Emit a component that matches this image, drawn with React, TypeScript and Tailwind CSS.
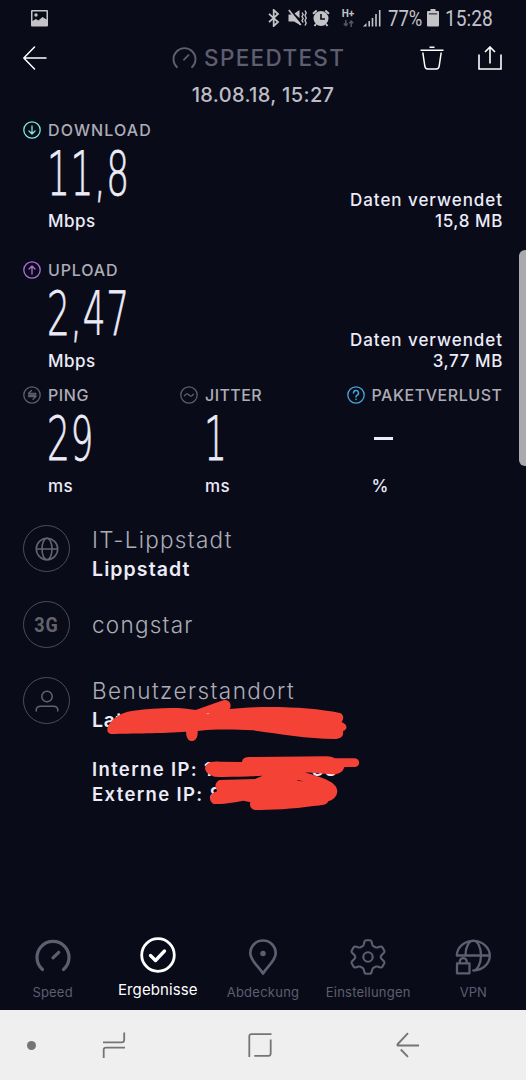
import type { ReactNode } from 'react';

const tabs = [
  { id: 'speed', label: 'Speed', tracking: 'tracking-[0.2px]' },
  { id: 'results', label: 'Ergebnisse', tracking: 'tracking-[0.1px]', active: true },
  { id: 'coverage', label: 'Abdeckung', tracking: 'tracking-[0.25px]' },
  { id: 'settings', label: 'Einstellungen', tracking: 'tracking-[0.2px]' },
  { id: 'vpn', label: 'VPN', tracking: 'tracking-normal' },
];

function StatusBar() {
  return (
    <div className="flex h-9 shrink-0 items-center pl-[31px] text-[#c3c3c8]">
      <svg width="17" height="17" viewBox="0 0 17 17" className="mr-auto">
        <path
          fill="currentColor"
          fillRule="evenodd"
          d="M1 0h15a1 1 0 0 1 1 1v14.500a1 1 0 0 1-1 1H1a1 1 0 0 1-1-1V1a1 1 0 0 1 1-1Zm.5 1.500V11l3.400-2 2.500 1.600L11.500 7l4 2.500V1.500Z"
        />
        <circle cx="5" cy="5" r="1.700" fill="currentColor" />
      </svg>

      <svg width="12" height="18" viewBox="0 0 12 18" className="mr-2" fill="none" stroke="currentColor" strokeWidth="1.800">
        <path d="M1 4.800 10 13l-4.300 4V1L10 5 1 13.200" />
      </svg>
      <svg width="19" height="18" viewBox="0 0 19 18" className="mr-[5px]" fill="none" stroke="currentColor">
        <path d="M.5 5.500h3.500l8 8v2.500L6 12.500H.5Z" fill="currentColor" stroke="none" />
        <path d="M6.500 4.500 11.500 1v8.200Z" fill="currentColor" stroke="none" />
        <path d="m.8 1 12 15" strokeWidth="1.600" />
        <path d="m14 3.500 1.200 2L14 7.500l1.200 2-1.200 2 1.200 2M17 1.500 18.200 4 17 6.500 18.200 9 17 11.500l1.200 2.500-1.200 2.500" strokeWidth="1.400" />
      </svg>
      <svg width="18" height="18" viewBox="0 0 18 18" className="mr-[11px]">
        <circle cx="9" cy="9.500" r="7.500" fill="currentColor" />
        <path d="M1 4.700 4.700 1.400M17 4.700l-3.700-3.300M4 15l-1.500 2M14 15l1.500 2" stroke="currentColor" strokeWidth="2" />
        <path d="M9 5v5h4" fill="none" stroke="#0a0b19" strokeWidth="1.600" />
      </svg>
      <div className="mr-[8px] flex w-[14px] flex-col items-center">
        <span className="font-['Roboto'] text-[10px] leading-[10px] font-bold">H+</span>
        <svg width="11" height="7" viewBox="0 0 11 7" className="mt-px" fill="none" stroke="#55565f" strokeWidth="1.500">
          <path d="M2.800 0v5.500M.8 3.500l2 2.200 2-2.200M8.200 7V1.200M6.200 3.300l2-2.200 2 2.200" />
        </svg>
      </div>
      <svg width="18" height="18" viewBox="0 0 18 18" className="mr-[7px]" fill="none" stroke="currentColor" strokeWidth="1.600">
        <path d="M0 17.500 3.500 14v3.500Z" fill="currentColor" stroke="none" />
        <path d="M6.200 17.500v-5.500M9.500 17.500V9M13 17.500V5M16.700 17.500V1" />
      </svg>
      <span className="mt-px w-[34px] origin-left scale-x-[0.84] font-['Roboto'] text-[22px] leading-none">77%</span>
      <svg width="12" height="18" viewBox="0 0 12 18" className="mr-[6px] ml-[5px]">
        <path d="M3.500 0h5v2h2.500a1 1 0 0 1 1 1v13.500a1 1 0 0 1-1 1H1a1 1 0 0 1-1-1V3a1 1 0 0 1 1-1h2.500Z" fill="currentColor" />
        <path d="M1.800 4.800h8.400" stroke="#55565f" strokeWidth="1.600" />
      </svg>
      <span className="mt-px mr-[33px] w-[48px] origin-left scale-x-[0.87] font-['Roboto'] text-[22px] leading-none">15:28</span>
    </div>
  );
}

function Header() {
  return (
    <header className="flex h-11 shrink-0 items-center pr-6 pl-[23px] text-white">
      <svg width="24" height="24" viewBox="0 0 24 24" fill="none" stroke="currentColor" strokeWidth="1.500" strokeLinecap="round" strokeLinejoin="round">
        <path d="M11.500 1 .8 12l10.700 11M.8 12H23" />
      </svg>
      <div className="ml-[125px] flex items-center gap-[7px] text-[#5d5e6f]">
        <svg width="25" height="22" viewBox="0 0 25 22" className="-mt-px" fill="none" stroke="currentColor" strokeWidth="1.900" strokeLinecap="round">
          <path d="M5 20.200a11 11 0 1 1 15 0M12 12.700l4.500-4.500" />
        </svg>
        <span className="mt-px text-[22.500px] leading-none font-medium tracking-[1.350px]">SPEEDTEST</span>
      </div>
      <svg width="24" height="24" viewBox="0 0 24 24" className="ml-auto" fill="none" stroke="currentColor" strokeWidth="1.500">
        <path d="M.5 4.200h23M9.500 1.200h5M2.800 6.500l2 13.500q.4 3 3 3h8.400q2.600 0 3-3l2-13.500" />
      </svg>
      <svg width="24" height="24" viewBox="0 0 24 24" className="ml-[34px]" fill="none" stroke="currentColor" strokeWidth="1.600">
        <path d="M1 8.500V23h22V8.500M12 17.500V1.500M7 6l5-5 5 5" />
      </svg>
    </header>
  );
}

type MetricProps = {
  icon: ReactNode;
  label: string;
  value: string;
  unit: string;
  iconColor: string;
  labelTracking?: string;
  className?: string;
};

function Metric({ icon, label, value, unit, iconColor, labelTracking = 'tracking-[0.6px]', className = '' }: MetricProps) {
  return (
    <div className={className}>
      <div className="flex h-[41px] items-center gap-[7px]">
        <svg width="18" height="18" viewBox="0 0 18 18" className={iconColor} fill="none" stroke="currentColor" strokeWidth="1.300" strokeLinecap="round" strokeLinejoin="round">
          <circle cx="9" cy="9" r="8.200" />
          {icon}
        </svg>
        <span className={`mt-px text-base leading-none font-medium text-[#adadb6] ${labelTracking}`}>{label}</span>
      </div>
      <div className="ml-6 flex h-[46px] items-center">
        {value === '–' ? (
          <span className="mt-px ml-[3px] h-[3px] w-[19px] bg-[#ececf8]" />
        ) : (
          <span className="origin-left scale-x-[0.59] font-['DejaVu_Sans'] text-[61px] leading-none font-extralight tracking-[1.200px] whitespace-nowrap text-[#ececf8] [-webkit-text-stroke:0.8px_#ececf8]">
            {value}
          </span>
        )}
      </div>
      <div className="ml-[25px] flex h-[50px] items-center pt-px">
        <span className="text-[17px] leading-none font-medium tracking-[0.5px] text-[#ececf8]">{unit}</span>
      </div>
    </div>
  );
}

function DataUsed({ amount }: { amount: string }) {
  return (
    <div className="pt-[81px] text-right text-[17px] leading-[21px] font-medium text-[#ececf8]">
      <p className="tracking-[0.950px]">Daten verwendet</p>
      <p className="tracking-[0.6px]">{amount}</p>
    </div>
  );
}

function Badge({ children }: { children: ReactNode }) {
  return (
    <div className="mt-[15px] flex size-[47px] shrink-0 items-center justify-center rounded-full border border-[#4c4d5b] text-[#62636f]">
      {children}
    </div>
  );
}

function Details() {
  return (
    <section className="relative flex h-[300px] flex-col px-[23px]">
      <div className="flex h-[76px] gap-[22px]">
        <Badge>
          <svg width="24" height="24" viewBox="0 0 24 24" fill="none" stroke="currentColor" strokeWidth="1.600">
            <circle cx="12" cy="12" r="10.700" />
            <ellipse cx="12" cy="12" rx="5" ry="10.700" />
            <path d="M1.300 12h21.400" />
          </svg>
        </Badge>
        <div className="pt-[15px] whitespace-nowrap">
          <p className="text-[22.500px] leading-[29px] font-light tracking-[1.300px] text-[#adadb6]">IT-Lippstadt</p>
          <p className="pt-px text-[19.500px] leading-[29px] font-semibold tracking-[1.100px] text-[#ececf8]">Lippstadt</p>
        </div>
      </div>

      <div className="flex h-[76px] gap-[22px]">
        <Badge>
          <span className="origin-center scale-x-[0.9] font-['Roboto'] text-[20px] leading-none font-bold tracking-[1px]">3G</span>
        </Badge>
        <p className="pt-6 text-[22.500px] leading-[29px] font-light tracking-[1.250px] text-[#adadb6]">congstar</p>
      </div>

      <div className="flex gap-[22px]">
        <Badge>
          <svg width="24" height="24" viewBox="0 0 24 24" fill="none" stroke="currentColor" strokeWidth="1.500" strokeLinecap="round">
            <circle cx="12" cy="7.500" r="5.200" />
            <path d="M1.200 22v-.8q0-4 4.500-4h12.600q4.500 0 4.500 4v.8" />
          </svg>
        </Badge>
        <div className="pt-[14px] whitespace-nowrap">
          <p className="text-[22.500px] leading-[29px] font-light tracking-[1.450px] text-[#adadb6]">Benutzerstandort</p>
          <p className="pt-px text-[19.500px] leading-[29px] font-semibold tracking-[0.800px] text-[#ececf8]">Lat</p>
          <div className="mt-[22px] w-[246px] text-[18.500px] leading-[24.500px] font-semibold tracking-[1.350px] text-[#ececf8]">
            <p className="flex">
              Interne IP: 1<span className="ml-auto">38</span>
            </p>
            <p className="flex">
              Externe IP: 8<span className="mr-[6px] ml-auto">9</span>
            </p>
          </div>
        </div>
      </div>

      {/* marker strokes over the private values */}
      <svg width="290" height="160" viewBox="0 0 870 480" className="absolute top-[150px] left-20" fill="#f44336">
        <path d="M82 207C84 188 112 158 160 152C230 143 300 140 347 150L425 122C445 114 458 133 449 147C550 136 690 140 780 159C794 164 790 180 785 186C805 195 802 209 789 213C792 229 782 237 764 237C680 236 600 222 519 211C463 208 400 207 353 213C354 233 347 243 335 243C322 242 319 229 318 215C250 220 150 220 94 222C84 221 81 214 82 207Z" />
        <path d="M375 325C377 308 393 303 420 305L486 306C488 292 498 290 520 291L740 289Q755 289 765 295L824 295C842 297 842 319 825 321L793 321C789 337 775 343 755 343L675 337C720 352 771 364 772 393C771 412 756 421 745 424C740 435 728 436 700 438C640 447 570 450 525 450C511 448 508 435 511 427L490 422C453 430 418 433 401 432C389 427 387 411 395 402L413 392C402 383 405 367 418 360L525 357L548 347C490 350 430 352 403 350C385 344 376 336 375 325Z" />
        <path d="m650 360 22 4-17-1Z" fill="#0a0b19" />
        <path d="m378 161 11-2-5 4Z" fill="#d9d3dd" />
      </svg>
    </section>
  );
}

function TabIcon({ id }: { id: string }) {
  const common = {
    width: 36,
    height: 36,
    viewBox: '0 0 36 36',
    fill: 'none',
    stroke: 'currentColor',
    strokeWidth: 2.7,
    strokeLinecap: 'round' as const,
    strokeLinejoin: 'round' as const,
  };

  if (id === 'speed') {
    return (
      <svg {...common} strokeWidth={3.2}>
        <path d="M7.500 30.500A16 16 0 1 1 28.500 30.500M18 18.800l5.700-5.500" />
      </svg>
    );
  }
  if (id === 'results') {
    return (
      <svg {...common} strokeWidth={2.8}>
        <circle cx="18" cy="18" r="16.300" />
        <path d="m10.500 18.500 5 5L24.500 14" strokeWidth="3.300" />
      </svg>
    );
  }
  if (id === 'coverage') {
    return (
      <svg {...common}>
        <path d="M18 34.500C14 28 5.300 21.500 5.300 14.200a12.700 12.700 0 0 1 25.400 0C30.700 21.500 22 28 18 34.500Z" />
        <circle cx="18" cy="14.500" r="2" fill="currentColor" strokeWidth="1.500" />
      </svg>
    );
  }
  if (id === 'settings') {
    return (
      <svg {...common} strokeWidth={2.1}>
        <path d="M14.500 2.500Q15 1.300 16.200 1.300h3.600Q21 1.300 21.500 2.500l.8 3.200Q22.700 7 24 7.500l1.300.7q1 .5 2.200.2l2.800-.8q1.400-.3 2.100.8l1.800 3.100q.6 1.200-.3 2.200l-2.200 2.200q-1 1-1 2.100t1 2.100l2.200 2.200q.9 1 .3 2.200l-1.800 3.100q-.7 1.100-2.100.8l-2.800-.8q-1.200-.3-2.200.2l-1.300.7q-1.300.5-1.700 1.800l-.8 3.200q-.5 1.200-1.700 1.200h-3.600q-1.200 0-1.700-1.200l-.8-3.200q-.4-1.300-1.700-1.800l-1.300-.7q-1-.5-2.200-.2l-2.800.8q-1.400.3-2.100-.8l-1.800-3.100q-.6-1.200.3-2.200l2.200-2.200q1-1 1-2.100t-1-2.100l-2.200-2.200q-.9-1-.3-2.200l1.800-3.100q.7-1.100 2.100-.8l2.800.8q1.200.3 2.200-.2l1.300-.7q1.300-.5 1.700-1.800Z" />
        <circle cx="18" cy="18" r="4.700" />
      </svg>
    );
  }
  return (
    <svg {...common} strokeWidth={2.3}>
      <path d="M1.800 16.500a16.500 14.800 0 1 1 16.500 15M1.800 16.500H34.500M10.500 16C10.500 8 14 1.700 18.300 1.700S26 8 26 16.500 22 31.500 18.300 31.500" />
      <path d="M2 24.300h12.500v10H2ZM4.800 24v-1.500a3.400 3.400 0 0 1 6.900 0v1.500" />
    </svg>
  );
}

function TabBar() {
  return (
    <nav className="mt-auto grid h-[78px] shrink-0 grid-cols-5">
      {tabs.map((tab) => (
        <div
          key={tab.id}
          className={`flex flex-col items-center ${tab.active ? 'pt-[5px] text-white' : 'pt-[7px] text-[#5d5e6f]'}`}
        >
          <TabIcon id={tab.id} />
          <span
            className={`mt-[7px] leading-5 ${tab.active ? 'text-[15px]' : 'text-[13px]'} ${tab.tracking}`}
          >
            {tab.label}
          </span>
        </div>
      ))}
    </nav>
  );
}

function SystemBar() {
  return (
    <div className="flex h-[70px] shrink-0 items-center bg-[#efefef] pl-[26.500px] text-[#757575]">
      <span className="size-[9px] rounded-full bg-current" />
      <svg width="24" height="26" viewBox="0 0 24 26" className="ml-[66.500px]" fill="none" stroke="currentColor" strokeWidth="1.800">
        <path d="M1 10.300H20q2.200 0 2.200-2.200V.5M23 15.700H3.900q-2.200 0-2.200 2.200V26" />
      </svg>
      <svg width="24" height="24" viewBox="0 0 24 24" className="ml-[122px]" fill="none" stroke="currentColor" strokeWidth="1.800">
        <path d="M1.300 24V3.200q0-2 2-2H23.500M6.300 22.800H20.500q2.200 0 2.200-2.200V6.500" />
      </svg>
      <svg width="24" height="26" viewBox="0 0 24 26" className="ml-[123.500px]" fill="none" stroke="currentColor" strokeWidth="1.900" strokeLinejoin="round">
        <path d="M23 13.500H1.800q-.8-.7 0-1.500L12 1.200M4.800 17.500l7.200 7.300" />
      </svg>
    </div>
  );
}

export default function App() {
  return (
    <div className="relative flex h-[1080px] w-[526px] flex-col overflow-hidden bg-[#0a0b19] font-['Inter',sans-serif]">
      <StatusBar />
      <Header />
      <p className="h-[29px] shrink-0 pt-px text-center text-[20px] leading-[29px] font-medium tracking-[0.350px] text-[#bdbdc5]">
        18.08.18, 15:27
      </p>

      <section className="flex h-[140px] shrink-0 justify-between pr-[23px] pl-[23px]">
        <Metric
          icon={<path d="M9 5v8M6 10l3 3 3-3" />}
          iconColor="text-[#7de8dc]"
          label="DOWNLOAD"
          labelTracking="tracking-[1.100px]"
          value="11,8"
          unit="Mbps"
        />
        <DataUsed amount="15,8 MB" />
      </section>

      <section className="flex h-[125px] shrink-0 justify-between pr-[23px] pl-[23px]">
        <Metric
          icon={<path d="M9 13V5M6 8l3-3 3 3" />}
          iconColor="text-[#b070dc]"
          label="UPLOAD"
          labelTracking="tracking-[0.850px]"
          value="2,47"
          unit="Mbps"
        />
        <DataUsed amount="3,77 MB" />
      </section>

      <section className="flex h-[136px] shrink-0 pl-[23px]">
        <Metric
          className="w-[157px]"
          icon={<path d="M8.500 4.500 5.500 7.300h7.500M5.500 10.500h7.500l-3 2.800M5.500 9h7.500" />}
          iconColor="text-[#5d5e6f]"
          label="PING"
          value="29"
          unit="ms"
        />
        <Metric
          className="w-[166.500px]"
          icon={<path d="M4.500 9.800Q6.600 6.500 9 9t4.500-.8" />}
          iconColor="text-[#5d5e6f]"
          label="JITTER"
          labelTracking="tracking-[0.450px]"
          value="1"
          unit="ms"
        />
        <Metric
          icon={<path d="M6.500 7a2.500 2.500 0 1 1 3.700 2.200Q9 9.900 9 11M9 13.300v.1" strokeWidth="1.500" />}
          iconColor="text-[#45a8dc]"
          label="PAKETVERLUST"
          labelTracking="tracking-[0.550px]"
          value="–"
          unit="%"
        />
      </section>

      <Details />
      <TabBar />
      <SystemBar />

      {/* edge panel handle */}
      <div className="absolute top-[250px] right-0 h-[216px] w-[7px] rounded-l-md bg-[#a9a9ae]" />
    </div>
  );
}
